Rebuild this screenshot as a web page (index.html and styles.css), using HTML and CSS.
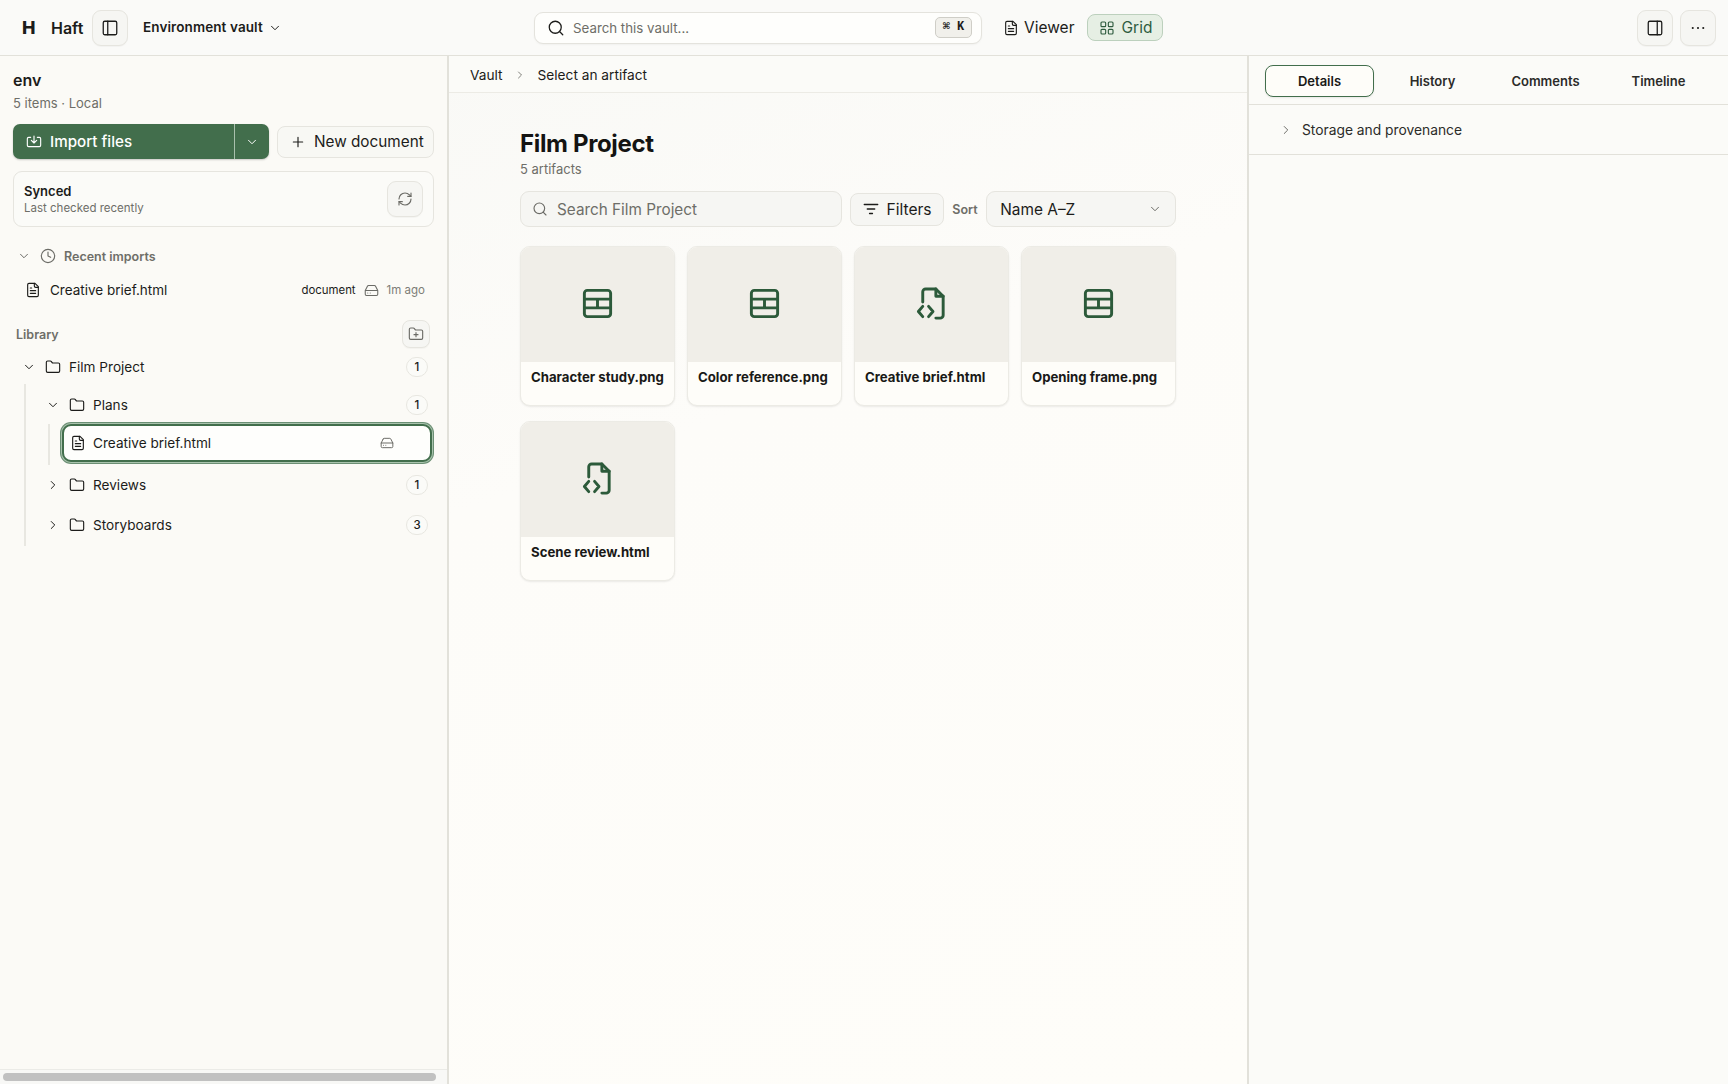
FILE: index.html
```html
<!DOCTYPE html>
<html lang="en">
<head>
    <meta charset="UTF-8">
    <title>Haft - Environment vault</title>
    <link rel="stylesheet" href="styles.css">
</head>
<body>
    <svg class="sprite" width="0" height="0">
        <symbol id="i-file" viewBox="0 0 24 24"><path d="M15 2H6a2 2 0 0 0-2 2v16a2 2 0 0 0 2 2h12a2 2 0 0 0 2-2V7z"/><path d="M14 2v4a2 2 0 0 0 2 2h4M8 9h2M8 13h8M8 17h8"/></symbol>
        <symbol id="i-folder" viewBox="0 0 24 24"><path d="M20 20a2 2 0 0 0 2-2V8a2 2 0 0 0-2-2h-7.9a2 2 0 0 1-1.7-.9l-.8-1.2A2 2 0 0 0 7.9 3H4a2 2 0 0 0-2 2v13a2 2 0 0 0 2 2z"/></symbol>
        <symbol id="i-down" viewBox="0 0 24 24"><path d="m6 9 6 6 6-6"/></symbol>
        <symbol id="i-right" viewBox="0 0 24 24"><path d="m9 6 6 6-6 6"/></symbol>
        <symbol id="i-drive" viewBox="0 0 24 24"><path d="M22 12H2M5.5 5.1 2 12v6a2 2 0 0 0 2 2h16a2 2 0 0 0 2-2v-6l-3.5-6.9A2 2 0 0 0 16.8 4H7.2a2 2 0 0 0-1.7 1.1z"/><path d="M6 16h.01M10 16h.01"/></symbol>
        <symbol id="i-search" viewBox="0 0 24 24"><circle cx="11" cy="11" r="8"/><path d="m21 21-4.3-4.3"/></symbol>
        <symbol id="i-table" viewBox="0 0 24 24"><rect x="3" y="3" width="18" height="18" rx="2"/><path d="M3 9h18M3 15h18M12 9v6"/></symbol>
        <symbol id="i-code" viewBox="0 0 24 24"><path d="M15 22h3a2 2 0 0 0 2-2V7l-5-5H8a2 2 0 0 0-2 2v7"/><path d="M15 2v5h5"/><path d="m6 14-3 3.5 3 3.5M10 14l3 3.5-3 3.5"/></symbol>
    </svg>

    <header class="topbar">
        <div class="brand">
            <span class="brand-mark">H</span>
            <span class="brand-name">Haft</span>
            <button class="icon-btn"><svg class="ico ico-18" viewBox="0 0 24 24"><rect x="3" y="3" width="18" height="18" rx="2"/><path d="M9 3v18"/></svg></button>
            <span class="vault-name">Environment vault</span>
            <svg class="ico ico-14 vault-caret"><use href="#i-down"/></svg>
        </div>
        <div class="top-search">
            <svg class="ico ico-18"><use href="#i-search"/></svg>
            <span class="top-search-text">Search this vault...</span>
            <span class="kbd">⌘ K</span>
        </div>
        <div class="view-switch">
            <span class="view-btn"><svg class="ico ico-16"><use href="#i-file"/></svg>Viewer</span>
            <span class="view-btn active">
                <svg class="ico ico-16" viewBox="0 0 24 24"><rect x="3" y="3" width="7" height="7" rx="1.5"/><rect x="14" y="3" width="7" height="7" rx="1.5"/><rect x="3" y="14" width="7" height="7" rx="1.5"/><rect x="14" y="14" width="7" height="7" rx="1.5"/></svg>Grid
            </span>
        </div>
        <div class="top-right">
            <button class="icon-btn"><svg class="ico ico-18" viewBox="0 0 24 24"><rect x="3" y="3" width="18" height="18" rx="2"/><path d="M15 3v18"/></svg></button>
            <button class="icon-btn"><svg class="ico ico-18 dots" viewBox="0 0 24 24"><path d="M5 12h.01M12 12h.01M19 12h.01"/></svg></button>
        </div>
    </header>

    <div class="main">
        <aside class="sidebar">
            <div class="sidebar-body">
                <div class="env-name">env</div>
                <div class="env-meta">5 items · Local</div>

                <div class="actions">
                    <div class="import-btn">
                        <span class="import-main">
                            <svg class="ico ico-16" viewBox="0 0 24 24"><path d="M12 3v10M8 9.5l4 4 4-4"/><path d="M7 5H4a2 2 0 0 0-2 2v10a2 2 0 0 0 2 2h16a2 2 0 0 0 2-2V7a2 2 0 0 0-2-2h-3"/></svg>
                            Import files
                        </span>
                        <span class="import-caret"><svg class="ico ico-14"><use href="#i-down"/></svg></span>
                    </div>
                    <div class="new-btn"><svg class="ico ico-16" viewBox="0 0 24 24"><path d="M5 12h14M12 5v14"/></svg>New document</div>
                </div>

                <div class="sync-card">
                    <div>
                        <div class="sync-title">Synced</div>
                        <div class="sync-sub">Last checked recently</div>
                    </div>
                    <button class="icon-btn"><svg class="ico ico-16 muted" viewBox="0 0 24 24"><path d="M3 12a9 9 0 0 1 9-9 9.8 9.8 0 0 1 6.7 2.7L21 8"/><path d="M21 3v5h-5"/><path d="M21 12a9 9 0 0 1-9 9 9.8 9.8 0 0 1-6.7-2.7L3 16"/><path d="M8 16H3v5"/></svg></button>
                </div>

                <div class="recent-head">
                    <svg class="ico ico-14 muted"><use href="#i-down"/></svg>
                    <svg class="ico ico-16 muted" viewBox="0 0 24 24"><circle cx="12" cy="12" r="10"/><path d="M12 6v6l4 2"/></svg>
                    <span>Recent imports</span>
                </div>
                <div class="recent-row">
                    <svg class="ico ico-16"><use href="#i-file"/></svg>
                    <span class="recent-name">Creative brief.html</span>
                    <span class="recent-type">document</span>
                    <svg class="ico ico-15 muted"><use href="#i-drive"/></svg>
                    <span class="recent-age">1m ago</span>
                </div>

                <div class="library-head">
                    <span>Library</span>
                    <button class="icon-btn small"><svg class="ico ico-16 muted" viewBox="0 0 24 24"><path d="M20 20a2 2 0 0 0 2-2V8a2 2 0 0 0-2-2h-7.9a2 2 0 0 1-1.7-.9l-.8-1.2A2 2 0 0 0 7.9 3H4a2 2 0 0 0-2 2v13a2 2 0 0 0 2 2z"/><path d="M12 10v6M9 13h6"/></svg></button>
                </div>

                <div class="tree">
                    <div class="tree-row top">
                        <svg class="ico ico-14"><use href="#i-down"/></svg>
                        <svg class="ico ico-16"><use href="#i-folder"/></svg>
                        <span class="tree-label">Film Project</span>
                        <span class="badge">1</span>
                    </div>
                    <div class="tree-children">
                        <div class="tree-row plans">
                            <svg class="ico ico-14"><use href="#i-down"/></svg>
                            <svg class="ico ico-16"><use href="#i-folder"/></svg>
                            <span class="tree-label">Plans</span>
                            <span class="badge">1</span>
                        </div>
                        <div class="tree-inner">
                            <div class="tree-file">
                                <svg class="ico ico-16"><use href="#i-file"/></svg>
                                <span class="tree-label">Creative brief.html</span>
                                <svg class="ico ico-14 muted"><use href="#i-drive"/></svg>
                            </div>
                        </div>
                        <div class="tree-row reviews">
                            <svg class="ico ico-14"><use href="#i-right"/></svg>
                            <svg class="ico ico-16"><use href="#i-folder"/></svg>
                            <span class="tree-label">Reviews</span>
                            <span class="badge">1</span>
                        </div>
                        <div class="tree-row stories">
                            <svg class="ico ico-14"><use href="#i-right"/></svg>
                            <svg class="ico ico-16"><use href="#i-folder"/></svg>
                            <span class="tree-label">Storyboards</span>
                            <span class="badge">3</span>
                        </div>
                    </div>
                </div>
            </div>
            <div class="side-scroll"><div class="side-thumb"></div></div>
        </aside>

        <main class="content">
            <div class="crumbs">
                <span>Vault</span>
                <svg class="ico ico-12 muted"><use href="#i-right"/></svg>
                <span>Select an artifact</span>
            </div>
            <div class="collection">
                <h1>Film Project</h1>
                <div class="count">5 artifacts</div>
                <div class="filters">
                    <div class="filter-search">
                        <svg class="ico ico-16 muted"><use href="#i-search"/></svg>
                        <span>Search Film Project</span>
                    </div>
                    <div class="filter-btn">
                        <svg class="ico ico-18" viewBox="0 0 24 24"><path d="M3 6h18M7 12h10M10 18h4"/></svg>Filters
                    </div>
                    <span class="sort-label">Sort</span>
                    <div class="sort-select">
                        <span>Name A–Z</span>
                        <svg class="ico ico-14 muted"><use href="#i-down"/></svg>
                    </div>
                </div>
                <div class="cards">
                    <div class="card">
                        <div class="thumb"><svg class="ico thumb-ico"><use href="#i-table"/></svg></div>
                        <div class="card-name">Character study.png</div>
                    </div>
                    <div class="card">
                        <div class="thumb"><svg class="ico thumb-ico"><use href="#i-table"/></svg></div>
                        <div class="card-name">Color reference.png</div>
                    </div>
                    <div class="card">
                        <div class="thumb"><svg class="ico thumb-ico"><use href="#i-code"/></svg></div>
                        <div class="card-name">Creative brief.html</div>
                    </div>
                    <div class="card">
                        <div class="thumb"><svg class="ico thumb-ico"><use href="#i-table"/></svg></div>
                        <div class="card-name">Opening frame.png</div>
                    </div>
                    <div class="card">
                        <div class="thumb"><svg class="ico thumb-ico"><use href="#i-code"/></svg></div>
                        <div class="card-name">Scene review.html</div>
                    </div>
                </div>
            </div>
        </main>

        <aside class="inspector">
            <div class="tabs">
                <span class="tab active">Details</span>
                <span class="tab">History</span>
                <span class="tab">Comments</span>
                <span class="tab">Timeline</span>
            </div>
            <div class="disclosure">
                <svg class="ico ico-14 muted"><use href="#i-right"/></svg>
                <span>Storage and provenance</span>
            </div>
        </aside>
    </div>
</body>
</html>
```

FILE: styles.css
```css
* {
    box-sizing: border-box;
}
html, body {
    margin: 0;
    height: 100%;
}
body {
    width: 1728px;
    height: 1084px;
    overflow: hidden;
    display: flex;
    flex-direction: column;
    font-family: Inter, "Liberation Sans", sans-serif;
    color: #1c1c1a;
    background: #fafaf7;
}
.sprite {
    position: absolute;
}
button {
    font: inherit;
    color: inherit;
    padding: 0;
}
.ico {
    flex: none;
    fill: none;
    stroke: currentColor;
    stroke-width: 1.7;
    stroke-linecap: round;
    stroke-linejoin: round;
}
.ico-12 { width: 12px; height: 12px; }
.ico-14 { width: 14px; height: 14px; }
.ico-15 { width: 15px; height: 15px; }
.ico-16 { width: 16px; height: 16px; }
.ico-18 { width: 18px; height: 18px; }
.muted { color: #6b6b66; }
.dots { stroke-width: 2.8; }

.icon-btn {
    width: 36px;
    height: 36px;
    display: flex;
    align-items: center;
    justify-content: center;
    flex: none;
    background: #f6f6f3;
    border: 1px solid #e6e5df;
    border-radius: 9px;
    box-shadow: 0 1px 1px rgba(0,0,0,0.03);
}
.icon-btn.small {
    width: 28px;
    height: 28px;
    border-radius: 8px;
}

/* top bar */
.topbar {
    height: 56px;
    flex: none;
    display: flex;
    align-items: center;
    border-bottom: 1px solid #e2e1da;
    background: #fafaf8;
}
.brand {
    width: 534px;
    flex: none;
    display: flex;
    align-items: center;
    padding-left: 22px;
}
.brand-mark {
    width: 29px;
    font-size: 18px;
    font-weight: 800;
}
.brand-name {
    font-size: 16px;
    font-weight: 600;
    width: 41px;
}
.vault-name {
    margin: 0 0 2px 15px;
    font-size: 13.5px;
    font-weight: 600;
    letter-spacing: 0.1px;
}
.vault-caret {
    margin-left: 5px;
}
.top-search {
    width: 448px;
    height: 32px;
    flex: none;
    display: flex;
    align-items: center;
    gap: 8px;
    padding: 0 9px 0 12px;
    background: #fefefc;
    border: 1px solid #e4e3dd;
    border-radius: 9px;
    box-shadow: 0 1px 2px rgba(0,0,0,0.04);
}
.top-search-text {
    flex: 1;
    font-size: 13.3px;
    color: #6e6e68;
}
.kbd {
    width: 37px;
    height: 21px;
    line-height: 19px;
    text-align: center;
    font-family: "Liberation Mono", monospace;
    font-size: 12px;
    font-weight: 700;
    background: #f1f0eb;
    border: 1px solid #cfcec7;
    border-radius: 5px;
}
.view-switch {
    display: flex;
    align-items: center;
    gap: 13px;
    margin-left: 21px;
}
.view-btn {
    display: flex;
    align-items: center;
    gap: 5px;
    height: 27px;
    font-size: 15.5px;
}
.view-btn.active {
    gap: 6px;
    width: 76px;
    padding-left: 11px;
    color: #2f5c3f;
    background: #e6efe4;
    border: 1px solid #bcd0bd;
    border-radius: 8px;
}
.top-right {
    margin-left: auto;
    display: flex;
    gap: 7px;
    padding-right: 12px;
}

/* columns */
.main {
    flex: 1;
    display: flex;
    min-height: 0;
}
.sidebar {
    width: 449px;
    flex: none;
    display: flex;
    flex-direction: column;
    background: #fbfaf6;
    border-right: 2px solid #e2e1da;
}
.sidebar-body {
    flex: 1;
    padding: 15px 13px 0;
}
.env-name {
    font-size: 16px;
    font-weight: 600;
    line-height: 19px;
}
.env-meta {
    margin-top: 4px;
    font-size: 13px;
    line-height: 18px;
    color: #6e6e68;
}
.actions {
    display: flex;
    align-items: center;
    margin-top: 12px;
}
.import-btn {
    width: 256px;
    height: 35px;
    display: flex;
    color: #fff;
    background: #426e4c;
    border-radius: 7px;
    box-shadow: 0 1px 2px rgba(0,0,0,0.2);
}
.import-main {
    flex: 1;
    display: flex;
    align-items: center;
    gap: 8px;
    padding-left: 13px;
    font-size: 15.2px;
    font-weight: 500;
}
.import-caret {
    width: 35px;
    display: flex;
    align-items: center;
    justify-content: center;
    border-left: 1px solid #a9c0ad;
}
.new-btn {
    width: 157px;
    height: 32px;
    margin-left: 8px;
    display: flex;
    align-items: center;
    gap: 8px;
    padding-left: 12px;
    font-size: 15.3px;
    background: #f8f8f4;
    border: 1px solid #e6e5df;
    border-radius: 8px;
}
.sync-card {
    height: 56px;
    margin-top: 12px;
    display: flex;
    align-items: center;
    justify-content: space-between;
    padding: 0 10px;
    background: #fbfbf8;
    border: 1px solid #e6e5df;
    border-radius: 9px;
}
.sync-title {
    font-size: 13px;
    font-weight: 600;
    line-height: 17px;
}
.sync-sub {
    font-size: 11.5px;
    line-height: 16px;
    color: #6e6e68;
}
.recent-head {
    display: flex;
    align-items: center;
    height: 20px;
    margin-top: 19px;
    padding-left: 4px;
    font-size: 12.5px;
    font-weight: 600;
    color: #6e6e68;
}
.recent-head .ico-16 {
    margin-left: 9px;
}
.recent-head span {
    margin-left: 8px;
}
.recent-row {
    display: flex;
    align-items: center;
    height: 24px;
    margin-top: 12px;
    padding: 0 9px 0 12px;
}
.recent-name {
    margin-left: 9px;
    flex: 1;
    font-size: 13.5px;
}
.recent-type {
    font-size: 11.4px;
    margin-right: 8px;
}
.recent-age {
    margin-left: 8px;
    font-size: 11.5px;
    color: #7d7d77;
}
.library-head {
    display: flex;
    align-items: center;
    justify-content: space-between;
    margin-top: 18px;
    padding: 0 4px 0 3px;
    font-size: 12.5px;
    font-weight: 600;
    color: #6e6e68;
}
.tree-row {
    display: flex;
    align-items: center;
    height: 30px;
    font-size: 13.6px;
}
.tree-row.top {
    margin-top: 4px;
    padding-left: 9px;
}
.tree-label {
    flex: 1;
    margin-left: 8px;
    font-size: 13.6px;
}
.tree-row .ico-16 {
    margin-left: 9px;
}
.badge {
    width: 22px;
    height: 20px;
    line-height: 18px;
    margin-right: 6px;
    text-align: center;
    font-size: 11.5px;
    font-weight: 500;
    background: #fbfbf8;
    border: 1px solid #e8e7e1;
    border-radius: 10px;
}
.tree-children {
    margin: 2px 0 0 11px;
    padding: 5px 0 4px;
    border-left: 2px solid #e8e7e1;
}
.tree-row.plans,
.tree-row.reviews,
.tree-row.stories {
    padding-left: 20px;
}
.tree-row.plans {
    height: 32px;
}
.tree-inner {
    margin: 1px 0 0 22px;
    padding-left: 13px;
    border-left: 2px solid #e8e7e1;
    height: 41px;
}
.tree-row.reviews {
    height: 38px;
    margin-top: 1px;
}
.tree-row.stories {
    height: 34px;
    margin-top: 4px;
}
.tree-file {
    width: 370px;
    height: 38px;
    margin-left: -1px;
    margin-top: 3px;
    display: flex;
    align-items: center;
    padding: 0 36px 0 6px;
    background: #fefefc;
    border: 2px solid #426e4c;
    border-radius: 9px;
    box-shadow: 0 0 0 1px #a9c3ad, 0 0 0 2px #6b8f74;
}
.tree-file .tree-label {
    margin-left: 7px;
}
.side-scroll {
    height: 15px;
    flex: none;
    padding: 3px 11px 3px 3px;
    background: #f8f8f6;
    border-top: 1px solid #ebebe7;
}
.side-thumb {
    height: 8px;
    background: #c1c1c1;
    border-radius: 4px;
}

/* centre */
.content {
    flex: 1;
    min-width: 0;
    background: linear-gradient(160deg, #f9f9f6 0%, #fdfcf9 35%, #fefdf9 100%);
}
.crumbs {
    height: 37px;
    display: flex;
    align-items: center;
    padding: 1px 0 0 21px;
    font-size: 13.7px;
    border-bottom: 1px solid #ecebe5;
    background: #fbfbf8;
}
.crumbs .ico {
    margin: 0 12px 0 11px;
}
.collection {
    padding: 36px 0 0 71px;
}
.collection h1 {
    margin: 0;
    font-size: 24px;
    font-weight: 700;
    line-height: 30px;
    letter-spacing: -0.35px;
    color: #141412;
}
.count {
    margin-top: 1px;
    font-size: 13px;
    line-height: 18px;
    color: #6e6e68;
}
.filters {
    display: flex;
    align-items: center;
    width: 656px;
    margin-top: 13px;
}
.filter-search {
    width: 323px;
    height: 36px;
    display: flex;
    align-items: center;
    gap: 9px;
    padding-left: 11px;
    font-size: 15.3px;
    color: #6e6e68;
    background: #f6f6f3;
    border: 1px solid #e6e5df;
    border-radius: 9px;
}
.filter-btn {
    width: 94px;
    height: 33px;
    margin-left: 8px;
    display: flex;
    align-items: center;
    gap: 6px;
    padding-left: 11px;
    font-size: 15.6px;
    background: #f6f6f3;
    border: 1px solid #e6e5df;
    border-radius: 8px;
}
.sort-label {
    margin-left: 8px;
    width: 34px;
    font-size: 12.5px;
    font-weight: 600;
    color: #6e6e68;
}
.sort-select {
    width: 190px;
    height: 36px;
    display: flex;
    align-items: center;
    justify-content: space-between;
    padding: 0 13px;
    font-size: 15.4px;
    background: #f6f6f3;
    border: 1px solid #e6e5df;
    border-radius: 9px;
}
.cards {
    display: grid;
    grid-template-columns: repeat(4, 155px);
    grid-auto-rows: 160px;
    gap: 15px 12px;
    margin-top: 19px;
}
.card {
    display: flex;
    flex-direction: column;
    background: #fefdf9;
    border: 1px solid #ecebe5;
    border-radius: 10px;
    box-shadow: 0 1px 2px rgba(0,0,0,0.08);
    overflow: hidden;
}
.thumb {
    height: 115px;
    flex: none;
    display: flex;
    align-items: center;
    justify-content: center;
    padding-bottom: 2px;
    background: #f0eee8;
    color: #2c5a3a;
}
.thumb-ico {
    width: 35px;
    height: 35px;
    stroke-width: 2;
}
.card-name {
    padding: 6px 10px;
    font-size: 13.2px;
    font-weight: 700;
    line-height: 18px;
    color: #191917;
    white-space: nowrap;
}

/* right panel */
.inspector {
    width: 481px;
    flex: none;
    background: #fbfbf8;
    border-left: 2px solid #e2e1da;
}
.tabs {
    height: 49px;
    display: grid;
    grid-template-columns: repeat(4, 109px);
    gap: 4px;
    padding: 9px 0 0 16px;
    border-bottom: 1px solid #e2e1da;
}
.tab {
    height: 32px;
    line-height: 30px;
    text-align: center;
    font-size: 13px;
    font-weight: 600;
    color: #2b2b29;
    border: 1px solid transparent;
    border-radius: 8px;
}
.tab.active {
    color: #191917;
    background: #fefdf9;
    border-color: #426e4c;
    box-shadow: 0 1px 2px rgba(0,0,0,0.08);
}
.disclosure {
    height: 50px;
    display: flex;
    align-items: center;
    gap: 9px;
    padding-left: 30px;
    font-size: 13.8px;
    color: #2b2b29;
    border-bottom: 1px solid #e2e1da;
}
```
